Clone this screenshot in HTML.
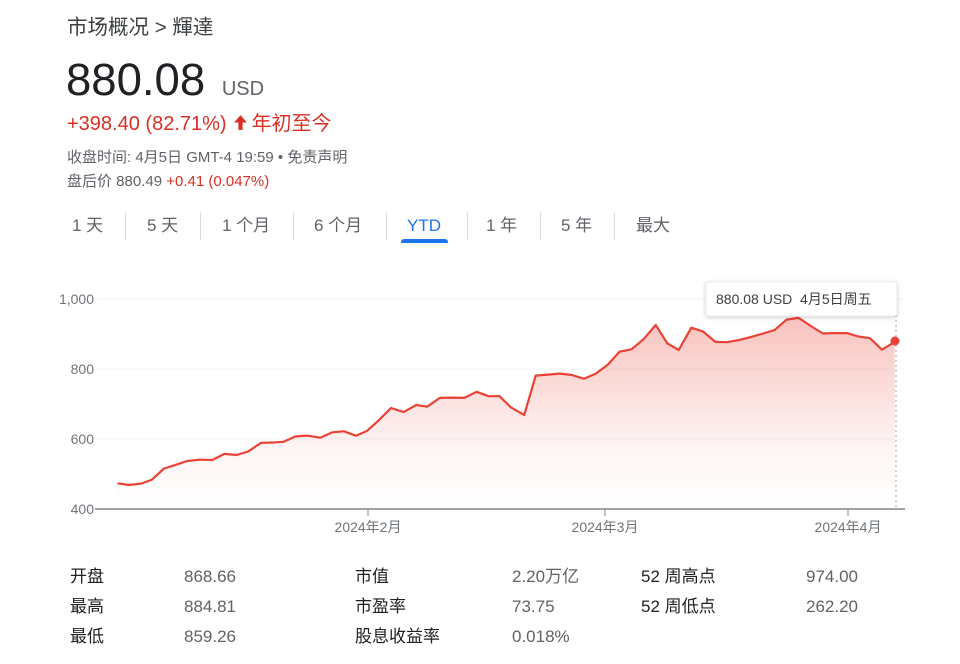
<!DOCTYPE html>
<html><head><meta charset="utf-8">
<style>
*{margin:0;padding:0;box-sizing:border-box}
body{width:960px;height:664px;background:#fff;font-family:"Liberation Sans","Noto Sans CJK SC",sans-serif;position:relative;overflow:hidden;color:#202124}
.a{position:absolute;white-space:nowrap}
.tab{position:absolute;top:214px;font-size:17px;color:#5f6368;line-height:24px}
.sep{position:absolute;top:212px;width:1px;height:28px;background:#dadce0}
.lab{position:absolute;font-size:17px;color:#202124;line-height:22px}
.val{position:absolute;font-size:17px;color:#5f6368;line-height:22px}
</style></head><body>
<div class="a" style="left:67px;top:15px;font-size:20.5px;color:#3c4043;line-height:26px">市场概况 &gt; 輝達</div>
<div class="a" style="left:66px;top:54px;font-size:45.5px;color:#202124;line-height:52px">880.08 <span style="font-size:20px;color:#5f6368;margin-left:4px">USD</span></div>
<div class="a" style="left:67px;top:111px;font-size:20px;color:#d93025;line-height:26px">+398.40 (82.71%)<svg width="19" height="19" viewBox="0 0 18 18" style="vertical-align:-2px;margin:0 2px 0 4px"><path d="M9 2 L3 9 H7 V16 H11 V9 H15 Z" fill="#d93025"/></svg>年初至今</div>
<div class="a" style="left:67px;top:148px;font-size:15px;color:#5f6368;line-height:20px">收盘时间: 4月5日 GMT-4 19:59 • 免责声明</div>
<div class="a" style="left:67px;top:172px;font-size:15px;color:#5f6368;line-height:20px">盘后价 880.49 <span style="color:#d93025">+0.41 (0.047%)</span></div>

<div class="tab" style="left:72px">1 天</div>
<div class="sep" style="left:125px"></div>
<div class="tab" style="left:147px">5 天</div>
<div class="sep" style="left:200px"></div>
<div class="tab" style="left:222px">1 个月</div>
<div class="sep" style="left:293px"></div>
<div class="tab" style="left:314px">6 个月</div>
<div class="sep" style="left:386px"></div>
<div class="tab" style="left:407px;color:#1a73e8">YTD</div>
<div class="a" style="left:401px;top:239px;width:47px;height:4px;background:#1a73e8;border-radius:3px 3px 0 0"></div>
<div class="sep" style="left:467px"></div>
<div class="tab" style="left:486px">1 年</div>
<div class="sep" style="left:540px"></div>
<div class="tab" style="left:561px">5 年</div>
<div class="sep" style="left:614px"></div>
<div class="tab" style="left:636px">最大</div>

<svg class="a" style="left:0;top:0" width="960" height="664" viewBox="0 0 960 664">
<defs><linearGradient id="g" gradientUnits="userSpaceOnUse" x1="0" y1="318" x2="0" y2="509">
<stop offset="0" stop-color="#ea4335" stop-opacity="0.32"/><stop offset="0.7" stop-color="#ea4335" stop-opacity="0.05"/><stop offset="1" stop-color="#ea4335" stop-opacity="0"/></linearGradient></defs>
<g stroke="#f1f3f4" stroke-width="1"><line x1="98" y1="299" x2="905" y2="299"/><line x1="98" y1="369" x2="905" y2="369"/><line x1="98" y1="439" x2="905" y2="439"/></g>
<g font-size="14" fill="#70757a" text-anchor="end" font-family="Liberation Sans,sans-serif">
<text x="94" y="304">1,000</text><text x="94" y="374">800</text><text x="94" y="444">600</text><text x="94" y="514">400</text></g>
<path fill="url(#g)" d="M117.5,483.3 L128.5,485 141.1,483.6 151.5,479.9 164.1,468.5 175.1,465.1 187.1,461 199.7,459.7 212.3,460 224.4,453.9 236.5,455 248,451.6 261.1,442.8 273.7,442.5 283.6,441.8 295.6,436.4 307.7,435.7 320.3,437.7 332.4,432.3 343.9,431.3 355.9,435.7 366.9,431 378.9,420.2 391,408 403.6,412.1 416.2,405 427.2,406.7 439.8,397.9 451.8,397.6 464.4,397.9 476.5,391.8 488.5,396.2 499.5,396.2 511,407.4 524.2,415.1 535.7,375.6 547.7,374.6 559.8,373.6 571.8,375 583.9,378.7 595.9,373.6 608,364.5 619.5,351.7 631.6,349.3 643.6,339.2 655.7,325 667.2,343.2 678.7,350 691.3,327.7 702.8,331.4 715.4,341.9 726.9,342.2 739.5,339.9 751.6,336.8 763.1,333.5 774.6,330.1 786.6,319.6 798.7,317.9 810.8,326 822.8,333.5 834.3,333.1 846.9,333.1 858.4,336.5 869.9,338.2 882,349.7 894.6,341.9 L894.6,509 L117.5,509 Z"/>
<polyline fill="none" stroke="#ea4335" stroke-width="2.2" stroke-linejoin="round" points="117.5,483.3 128.5,485 141.1,483.6 151.5,479.9 164.1,468.5 175.1,465.1 187.1,461 199.7,459.7 212.3,460 224.4,453.9 236.5,455 248,451.6 261.1,442.8 273.7,442.5 283.6,441.8 295.6,436.4 307.7,435.7 320.3,437.7 332.4,432.3 343.9,431.3 355.9,435.7 366.9,431 378.9,420.2 391,408 403.6,412.1 416.2,405 427.2,406.7 439.8,397.9 451.8,397.6 464.4,397.9 476.5,391.8 488.5,396.2 499.5,396.2 511,407.4 524.2,415.1 535.7,375.6 547.7,374.6 559.8,373.6 571.8,375 583.9,378.7 595.9,373.6 608,364.5 619.5,351.7 631.6,349.3 643.6,339.2 655.7,325 667.2,343.2 678.7,350 691.3,327.7 702.8,331.4 715.4,341.9 726.9,342.2 739.5,339.9 751.6,336.8 763.1,333.5 774.6,330.1 786.6,319.6 798.7,317.9 810.8,326 822.8,333.5 834.3,333.1 846.9,333.1 858.4,336.5 869.9,338.2 882,349.7 894.6,341.9"/>
<line x1="896" y1="315" x2="896" y2="509" stroke="#9aa0a6" stroke-width="1" stroke-dasharray="2,3"/>
<line x1="95" y1="509" x2="905" y2="509" stroke="#80868b" stroke-width="1.5"/>
<g stroke="#80868b" stroke-width="1"><line x1="368" y1="509" x2="368" y2="516"/><line x1="605" y1="509" x2="605" y2="516"/><line x1="848" y1="509" x2="848" y2="516"/></g>
<g font-size="14" fill="#70757a" text-anchor="middle" font-family="Liberation Sans,Noto Sans CJK SC,sans-serif">
<text x="368" y="532">2024年2月</text><text x="605" y="532">2024年3月</text><text x="848" y="532">2024年4月</text></g>
<circle cx="895" cy="341" r="4.5" fill="#ea4335"/>
<rect x="706" y="282" width="191" height="34" rx="3" fill="#fff" stroke="#eee" style="filter:drop-shadow(0 1px 2px rgba(0,0,0,.2))"/>
<text x="716" y="304" font-size="14" fill="#3c4043" font-family="Liberation Sans,Noto Sans CJK SC,sans-serif">880.08 USD&#160;&#160;4月5日周五</text>
</svg>

<div class="lab" style="left:70px;top:566px">开盘</div><div class="val" style="left:184px;top:566px">868.66</div>
<div class="lab" style="left:355px;top:566px">市值</div><div class="val" style="left:512px;top:566px">2.20万亿</div>
<div class="lab" style="left:641px;top:566px">52 周高点</div><div class="val" style="left:806px;top:566px">974.00</div>
<div class="lab" style="left:70px;top:596px">最高</div><div class="val" style="left:184px;top:596px">884.81</div>
<div class="lab" style="left:355px;top:596px">市盈率</div><div class="val" style="left:512px;top:596px">73.75</div>
<div class="lab" style="left:641px;top:596px">52 周低点</div><div class="val" style="left:806px;top:596px">262.20</div>
<div class="lab" style="left:70px;top:626px">最低</div><div class="val" style="left:184px;top:626px">859.26</div>
<div class="lab" style="left:355px;top:626px">股息收益率</div><div class="val" style="left:512px;top:626px">0.018%</div>
</body></html>
